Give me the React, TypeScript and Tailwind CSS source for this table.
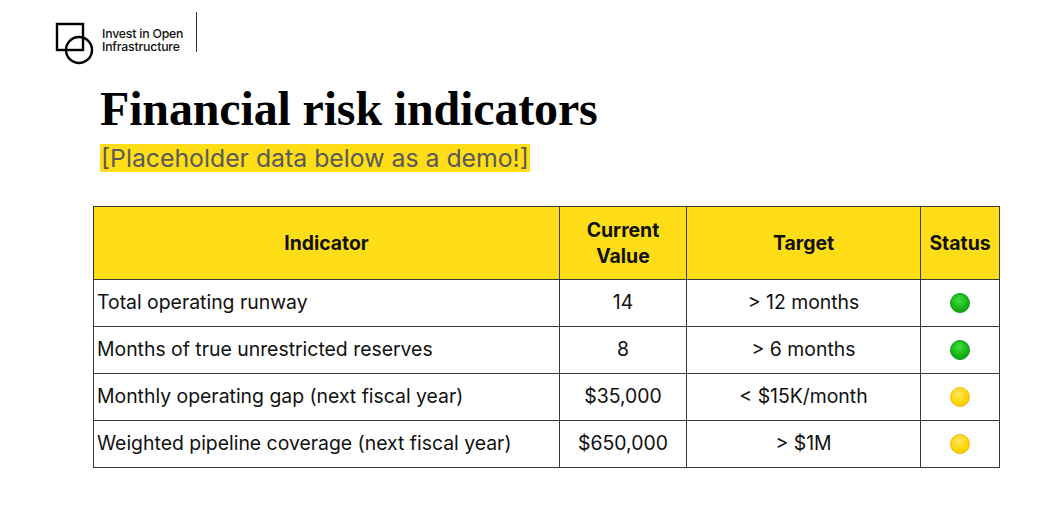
import React from "react";

type Row = {
  indicator: string;
  value: string;
  target: string;
  status: "green" | "yellow";
};

const rows: Row[] = [
  { indicator: "Total operating runway", value: "14", target: "> 12 months", status: "green" },
  { indicator: "Months of true unrestricted reserves", value: "8", target: "> 6 months", status: "green" },
  { indicator: "Monthly operating gap (next fiscal year)", value: "$35,000", target: "< $15K/month", status: "yellow" },
  { indicator: "Weighted pipeline coverage (next fiscal year)", value: "$650,000", target: "> $1M", status: "yellow" },
];

function Logo() {
  return (
    <div className="flex items-start">
      <svg width="42" height="44" viewBox="0 0 42 44" className="shrink-0">
        <rect x="2" y="2" width="26" height="26" fill="none" stroke="#000" strokeWidth="2.4" />
        <circle cx="24" cy="28" r="13" fill="none" stroke="#000" strokeWidth="2.4" />
      </svg>
      <div className="ml-[5px] mt-[5px] text-[12.3px] leading-[13px] font-medium tracking-[-0.2px] text-[#111]">
        <div>Invest in Open</div>
        <div>Infrastructure</div>
      </div>
      <div className="ml-[13px] w-px h-[40px] bg-[#333] -mt-[10px]" />
    </div>
  );
}

function Dot({ color }: { color: "green" | "yellow" }) {
  const cls =
    color === "green"
      ? "bg-[radial-gradient(circle_at_45%_35%,#3ee03e_0%,#18b418_55%,#0c8e0c_100%)] border border-[#129a12]"
      : "bg-[radial-gradient(circle_at_45%_35%,#ffe766_0%,#ffd500_55%,#f5c000_100%)] border border-[#f0b830]";
  return <div className={`w-[20px] h-[20px] rounded-full ${cls}`} />;
}

export default function App() {
  return (
    <div className="w-[1058px] h-[513px] bg-white relative overflow-hidden font-['Inter',sans-serif]">
      <div className="pl-[55px] pt-[22px]">
        <Logo />
      </div>

      <div className="pl-[100px] mt-[17px]">
        <h1 className="font-['Liberation_Serif',serif] font-bold text-[48px] leading-[52px] tracking-[-0.15px] text-black">
          Financial risk indicators
        </h1>
        <div className="mt-[9px] inline-block bg-[#ffdd17] px-[1px] h-[28px] text-[24.8px] leading-[28px] text-[#5a5a5a]">
          [Placeholder data below as a demo!]
        </div>
      </div>

      <div className="pl-[93px] mt-[33px]">
        <table className="border-collapse text-[19.4px] text-[#111] border-[1.5px] border-[#3a3a3a]">
          <colgroup>
            <col className="w-[466px]" />
            <col className="w-[127px]" />
            <col className="w-[234px]" />
            <col className="w-[79px]" />
          </colgroup>
          <thead>
            <tr className="h-[73px] bg-[#ffdd17] font-bold leading-[26px]">
              <th className="border-[1.5px] border-[#3a3a3a] font-bold">Indicator</th>
              <th className="border-[1.5px] border-[#3a3a3a] font-bold">
                Current
                <br />
                Value
              </th>
              <th className="border-[1.5px] border-[#3a3a3a] font-bold">Target</th>
              <th className="border-[1.5px] border-[#3a3a3a] font-bold">Status</th>
            </tr>
          </thead>
          <tbody>
            {rows.map((r) => (
              <tr key={r.indicator} className="h-[47px]">
                <td className="border-[1.5px] border-[#3a3a3a] pl-[3px] whitespace-nowrap">{r.indicator}</td>
                <td className="border-[1.5px] border-[#3a3a3a] text-center">{r.value}</td>
                <td className="border-[1.5px] border-[#3a3a3a] text-center">{r.target}</td>
                <td className="border-[1.5px] border-[#3a3a3a]">
                  <div className="flex justify-center">
                    <Dot color={r.status} />
                  </div>
                </td>
              </tr>
            ))}
          </tbody>
        </table>
      </div>
    </div>
  );
}
